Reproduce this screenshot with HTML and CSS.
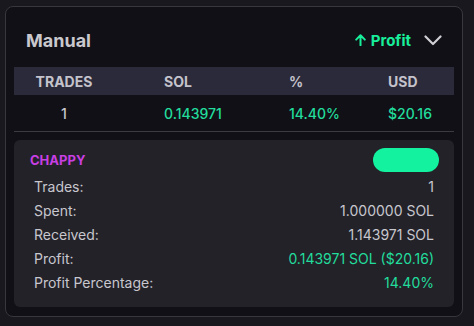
FILE: index.html
```html
<!DOCTYPE html>
<html lang="en">
<head>
  <meta charset="UTF-8">
  <meta name="viewport" content="width=device-width, initial-scale=1.0">
  <title>Manual Trades</title>
  <link rel="stylesheet" href="styles.css">
</head>
<body>
  <div class="card">
    <div class="card-header">
      <div class="title">Manual</div>
      <div class="header-right">
        <span class="profit-tag">
          <svg class="arrow" width="11" height="12" viewBox="0 0 11 12">
            <path d="M5.5 11.2V1.3M1.2 5.6L5.5 1.3l4.3 4.3" fill="none" stroke="currentColor" stroke-width="2" stroke-linecap="round" stroke-linejoin="round"/>
          </svg>
          Profit
        </span>
        <svg class="chevron" width="18" height="11" viewBox="0 0 18 11">
          <path d="M1.5 1.5L9 9l7.5-7.5" fill="none" stroke="currentColor" stroke-width="2.2" stroke-linecap="round" stroke-linejoin="round"/>
        </svg>
      </div>
    </div>

    <!-- Summary table -->
    <div class="table">
      <div class="thead">
        <div class="cell c1">TRADES</div>
        <div class="cell c2">SOL</div>
        <div class="cell c3">%</div>
        <div class="cell c4">USD</div>
      </div>
      <div class="trow">
        <div class="cell c1">1</div>
        <div class="cell c2 green">0.143971</div>
        <div class="cell c3 green">14.40%</div>
        <div class="cell c4 green">$20.16</div>
      </div>
    </div>

    <!-- Wallet details -->
    <div class="panel">
      <div class="panel-top">
        <span class="wallet-name">CHAPPY</span>
        <span class="pill"></span>
      </div>
      <div class="stat"><span>Trades:</span><span>1</span></div>
      <div class="stat"><span>Spent:</span><span>1.000000 SOL</span></div>
      <div class="stat"><span>Received:</span><span>1.143971 SOL</span></div>
      <div class="stat"><span>Profit:</span><span class="green">0.143971 SOL ($20.16)</span></div>
      <div class="stat"><span>Profit Percentage:</span><span class="green">14.40%</span></div>
    </div>
  </div>
</body>
</html>
```

FILE: styles.css
```css
body {
  margin: 0;
  padding: 6px 0 0 5px;
  background-color: #19181e;
  font-family: Inter, "Noto Sans", sans-serif;
  color: #c8c7ce;
}

.card {
  box-sizing: border-box;
  width: 458px;
  height: 311px;
  padding: 0 8px 8px 8px;
  background-color: #111017;
  border: 1px solid #38373e;
  border-radius: 8px;
}

.card-header {
  display: flex;
  align-items: center;
  justify-content: space-between;
  height: 50px;
  padding: 8px 12px 2px 12px;
}

.title {
  font-size: 18px;
  font-weight: 700;
  color: #c9c8cd;
}

.header-right {
  display: flex;
  align-items: center;
  gap: 13px;
}

.profit-tag {
  display: flex;
  align-items: center;
  gap: 5px;
  font-size: 15px;
  font-weight: 700;
  color: #18ef9b;
}

.chevron {
  color: #cfcfd4;
}

.table {
  font-size: 14px;
}

.thead, .trow {
  display: grid;
  grid-template-columns: 100px 175px 99px 1fr;
  align-items: center;
}

.thead {
  height: 28px;
  background-color: #2b2a3a;
  font-weight: 700;
  color: #c4c3cc;
}

.trow {
  height: 36px;
  border-bottom: 1px solid #3c3b42;
  font-weight: 500;
}

.c1 {
  text-align: center;
}

.c2 {
  padding-left: 50px;
}

.green {
  color: #22dc9c;
}

.panel {
  margin-top: 8px;
  padding: 8px 15px 13px 16px;
  background-color: #232229;
  border-radius: 6px;
  font-size: 14px;
}

.panel-top {
  display: flex;
  justify-content: space-between;
  align-items: center;
  height: 24px;
  margin-bottom: 2px;
}

.wallet-name {
  font-size: 13px;
  font-weight: 700;
  color: #c83fe3;
}

.pill {
  width: 66px;
  height: 24px;
  border-radius: 12px;
  background-color: #12f29f;
}

.stat {
  display: flex;
  justify-content: space-between;
  align-items: center;
  height: 24px;
  padding: 0 5px 0 4px;
}
```
